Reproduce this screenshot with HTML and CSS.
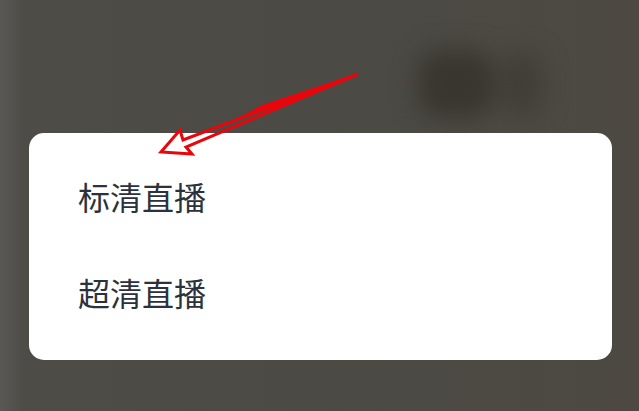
FILE: index.html
```html
<!DOCTYPE html>
<html lang="zh-CN">

<head>
    <meta charset="UTF-8">
    <meta name="viewport" content="width=device-width, initial-scale=1.0">
    <title>直播清晰度</title>
    <link rel="stylesheet" href="styles.css">
</head>

<body>
    <div class="screen">
        <div class="blur-shape">
            <div class="blur-left"></div>
            <div class="blur-right"></div>
        </div>

        <div class="menu">
            <div class="menu-item">标清直播</div>
            <div class="menu-item">超清直播</div>
        </div>

        <!-- hand drawn arrow on top of the screenshot -->
        <svg class="arrow" viewBox="0 0 639 411" width="639" height="411">
            <path class="arrow-fill" d="M358 73 L262 105 L240 117 L272 109 Z" />
            <path class="arrow-line" d="M358 74 L183 140 L180 130 L161 152 L192 154 L186 147 Z" />
        </svg>
    </div>
</body>
</html>
```

FILE: styles.css
```css
html, body {
    height: 100%;
    margin: 0;
    font-family: "Noto Sans CJK SC", "Liberation Sans", sans-serif;
}

.screen {
    position: relative;
    width: 639px;
    height: 411px;
    padding: 133px 27px 51px 29px;
    box-sizing: border-box;
    overflow: hidden;
    background: linear-gradient(90deg, #595854 0, #4d4c47 24px, #4b4a44 50%, #4d4942 100%);
}

.blur-shape {
    position: absolute;
    top: 40px;
    left: 412px;
    width: 145px;
    height: 90px;
    filter: blur(12px);
}

.blur-left {
    position: absolute;
    top: 10px;
    left: 6px;
    width: 76px;
    height: 68px;
    border-radius: 24px;
    background-color: #38362f;
}

.blur-right {
    position: absolute;
    top: 12px;
    left: 90px;
    width: 40px;
    height: 64px;
    border-radius: 18px;
    background-color: #403e37;
}

.menu {
    position: relative;
    display: flex;
    flex-direction: column;
    height: 100%;
    padding-top: 15px;
    box-sizing: border-box;
    border-radius: 15px;
    background-color: #fff;
}

.menu-item {
    height: 96px;
    padding-left: 49px;
    font-size: 32px;
    line-height: 96px;
    color: #2b323b;
}

.arrow {
    position: absolute;
    top: 0;
    left: 0;
}

.arrow-fill {
    fill: #e8060c;
}

.arrow-line {
    fill: none;
    stroke: #e8060c;
    stroke-width: 3;
    stroke-linejoin: miter;
}
```
